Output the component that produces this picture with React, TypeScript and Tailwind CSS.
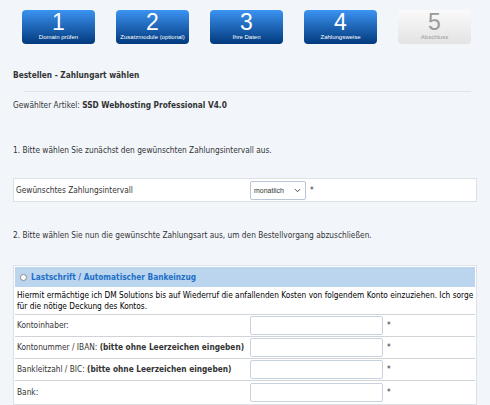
const steps = [
  { n: '1', label: 'Domain prüfen', active: true },
  { n: '2', label: 'Zusatzmodule (optional)', active: true },
  { n: '3', label: 'Ihre Daten', active: true },
  { n: '4', label: 'Zahlungsweise', active: true },
  { n: '5', label: 'Abschluss', active: false },
]

const fields = [
  { label: 'Kontoinhaber:', hint: '' },
  { label: 'Kontonummer / IBAN:', hint: '(bitte ohne Leerzeichen eingeben)' },
  { label: 'Bankleitzahl / BIC:', hint: '(bitte ohne Leerzeichen eingeben)' },
  { label: 'Bank:', hint: '' },
]

export default function App() {
  return (
    <div className="w-[490px] h-[405px] overflow-hidden bg-[#f2f6fb] text-[#333] text-[8.25px] leading-[11px] [font-family:'DejaVu_Sans_Condensed','Noto_Sans',sans-serif]">
      {/* Steps */}
      <div className="flex gap-[21px] pl-[22px] pt-[10px]">
        {steps.map((s) => (
          <div
            key={s.n}
            className={
              s.active
                ? 'w-[73px] h-[34px] rounded-[4px] flex flex-col items-center bg-gradient-to-b from-[#3c94f2] to-[#023a7e] text-white'
                : 'w-[73px] h-[34px] rounded-[4px] flex flex-col items-center bg-gradient-to-b from-[#fafafa] to-[#e3e3e3] text-[#9a9a9a]'
            }
          >
            <div className="text-[23px] leading-[23px] mt-[1px] [font-family:'Liberation_Sans',sans-serif]">{s.n}</div>
            <div className="text-[6px] leading-[7px] whitespace-nowrap [font-family:'Liberation_Sans',sans-serif]">{s.label}</div>
          </div>
        ))}
      </div>

      <div className="px-[13px]">
        <div className="mt-[26px] font-bold">Bestellen - Zahlungart wählen</div>
        <div className="ml-[11px] mr-[6px] mt-[10px] border-t border-[#e2e6ea]" />
        <div className="mt-[8px]">
          Gewählter Artikel: <b>SSD Webhosting Professional V4.0</b>
        </div>
        <div className="mt-[34px]">1. Bitte wählen Sie zunächst den gewünschten Zahlungsintervall aus.</div>

        {/* Interval */}
        <div className="mt-[22px] h-[24px] bg-white border border-[#dde1e5] flex items-center">
          <div className="w-[236px] pl-[2px]">Gewünschtes Zahlungsintervall</div>
          <div className="w-[56px] h-[19px] border border-[#b9c6d6] rounded-[2px] flex items-center justify-between px-[3px] text-[7px] [font-family:'Liberation_Sans',sans-serif]">
            <span>monatlich</span>
            <svg width="7" height="5" viewBox="0 0 7 5" className="mr-[1px]">
              <path d="M1 1.2 L3.5 3.7 L6 1.2" stroke="#444" strokeWidth="1" fill="none" />
            </svg>
          </div>
          <span className="ml-[4px]">*</span>
        </div>

        <div className="mt-[28px]">
          2. Bitte wählen Sie nun die gewünschte Zahlungsart aus, um den Bestellvorgang abzuschließen.
        </div>

        {/* Payment */}
        <div className="mt-[24px] bg-white border border-[#dde1e5] p-[1px]">
          <div className="h-[20px] bg-[#bcd5ee] flex items-center pl-[5px] gap-[4px] text-[#1d6fc7] font-bold">
            <span className="w-[7px] h-[7px] rounded-full bg-white border border-[#8a8a8a]" />
            <span>Lastschrift / Automatischer Bankeinzug</span>
          </div>
          <div className="pl-[2px] pt-[3px] pb-[2px] border-b border-[#d0d4d8] text-black">
            Hiermit ermächtige ich DM Solutions bis auf Wiederruf die anfallenden Kosten von folgendem Konto einzuziehen. Ich sorge
            <br />
            für die nötige Deckung des Kontos.
          </div>
          {fields.map((f, i) => (
            <div
              key={f.label}
              className={
                i < fields.length - 1
                  ? 'h-[22px] flex items-center border-b border-[#d0d4d8]'
                  : 'h-[22px] flex items-center'
              }
            >
              <div className="w-[235px] pl-[2px] whitespace-nowrap">
                {f.label} {f.hint && <b>{f.hint}</b>}
              </div>
              <div className="w-[133px] h-[19px] border border-[#c8d2de] rounded-[2px] bg-white" />
              <span className="ml-[4px]">*</span>
            </div>
          ))}
        </div>
      </div>
    </div>
  )
}
